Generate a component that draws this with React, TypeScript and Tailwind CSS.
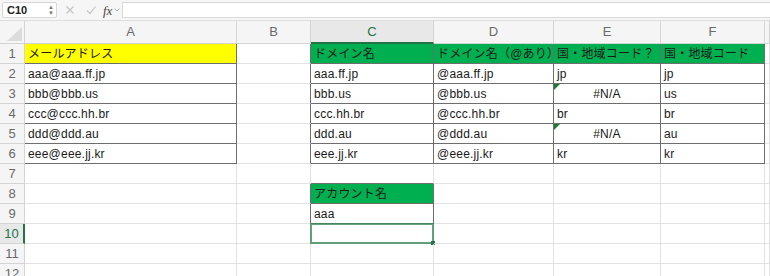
import React from "react";

type Cell = { text?: string; bg?: string; center?: boolean; tri?: boolean };

const data: Record<string, Cell> = {
  "1,1": { text: "メールアドレス", bg: "yellow" },
  "2,1": { text: "aaa@aaa.ff.jp" },
  "3,1": { text: "bbb@bbb.us" },
  "4,1": { text: "ccc@ccc.hh.br" },
  "5,1": { text: "ddd@ddd.au" },
  "6,1": { text: "eee@eee.jj.kr" },
  "1,3": { text: "ドメイン名", bg: "green" },
  "1,4": { text: "ドメイン名（@あり）", bg: "green" },
  "1,5": { text: "国・地域コード？", bg: "green" },
  "1,6": { text: "国・地域コード", bg: "green" },
  "2,3": { text: "aaa.ff.jp" },
  "3,3": { text: "bbb.us" },
  "4,3": { text: "ccc.hh.br" },
  "5,3": { text: "ddd.au" },
  "6,3": { text: "eee.jj.kr" },
  "2,4": { text: "@aaa.ff.jp" },
  "3,4": { text: "@bbb.us" },
  "4,4": { text: "@ccc.hh.br" },
  "5,4": { text: "@ddd.au" },
  "6,4": { text: "@eee.jj.kr" },
  "2,5": { text: "jp" },
  "3,5": { text: "#N/A", center: true, tri: true },
  "4,5": { text: "br" },
  "5,5": { text: "#N/A", center: true, tri: true },
  "6,5": { text: "kr" },
  "2,6": { text: "jp" },
  "3,6": { text: "us" },
  "4,6": { text: "br" },
  "5,6": { text: "au" },
  "6,6": { text: "kr" },
  "8,3": { text: "アカウント名", bg: "green" },
  "9,3": { text: "aaa" },
};

const inTable = (r: number, c: number) =>
  (c === 1 && r >= 1 && r <= 6) ||
  (c >= 3 && c <= 6 && r >= 1 && r <= 6) ||
  (c === 3 && r >= 8 && r <= 9);

const letters = ["A", "B", "C", "D", "E", "F", ""];
const rows = Array.from({ length: 12 }, (_, i) => i + 1);
const font = { fontFamily: '"Liberation Sans", "Noto Sans CJK JP", sans-serif' };

export default function App() {
  return (
    <div className="w-[770px] h-[276px] overflow-hidden bg-white text-black" style={font}>
      {/* toolbar */}
      <div className="h-[21px] bg-[#f6f6f6] border-b border-[#dedede] flex items-center">
        <div className="ml-[2px] w-[55px] h-[16px] bg-white border border-[#d6d6d6] rounded-[2px] flex items-center justify-between pl-[4px] pr-[2px]">
          <span className="text-[11px] font-bold text-[#222] leading-none">C10</span>
          <span className="flex flex-col text-[6px] leading-[6px] text-[#777]">
            <span>▲</span>
            <span>▼</span>
          </span>
        </div>
        <svg className="ml-[8px]" width="10" height="10" viewBox="0 0 10 10">
          <path d="M1.5 1.5 L8.5 8.5 M8.5 1.5 L1.5 8.5" stroke="#c4c4c4" strokeWidth="1.2" fill="none" />
        </svg>
        <svg className="ml-[11px]" width="10" height="10" viewBox="0 0 10 10">
          <path d="M1 5.5 L4 8.5 L9.5 1.5" stroke="#c4c4c4" strokeWidth="1.2" fill="none" />
        </svg>
        <span className="ml-[7px] text-[13px] italic text-[#444] leading-none" style={{ fontFamily: '"Liberation Serif", serif' }}>
          fx
        </span>
        <svg className="ml-[2px]" width="6" height="6" viewBox="0 0 6 6">
          <path d="M0.5 1.5 L3 4 L5.5 1.5" stroke="#b4b4b4" strokeWidth="1" fill="none" />
        </svg>
        <div className="ml-[2px] flex-1 h-[16px] bg-white border border-[#d9d9d9] border-r-0" />
      </div>

      {/* grid */}
      <div className="grid grid-cols-[25px_212px_74px_123px_120px_107px_104px_1fr] grid-rows-[23px_repeat(12,20px)]">
        {/* header row */}
        <div className="bg-[#f5f5f5] border-r border-b border-[#d4d4d4] flex items-end justify-end">
          <svg width="20" height="18" viewBox="0 0 20 18">
            <polygon points="3,16 18,16 18,2" fill="#dcdcdc" />
          </svg>
        </div>
        {letters.map((l, i) =>
          l === "C" ? (
            <div
              key={i}
              className="bg-[#e8e8e8] border-r border-r-[#d4d4d4] border-b-2 border-b-[#217346] flex items-center justify-center text-[13px] text-[#217346]"
            >
              {l}
            </div>
          ) : (
            <div
              key={i}
              className="bg-[#f5f5f5] border-r border-b border-[#d4d4d4] flex items-center justify-center text-[13px] text-[#6a6a6a]"
            >
              {l}
            </div>
          )
        )}

        {rows.map((r) => (
          <React.Fragment key={r}>
            {r === 10 ? (
              <div className="bg-[#e8e8e8] border-r-2 border-r-[#217346] border-b border-b-[#d4d4d4] flex items-center justify-center text-[13px] text-[#217346]">
                {r}
              </div>
            ) : (
              <div className="bg-[#f5f5f5] border-r border-b border-[#d4d4d4] flex items-center justify-center text-[13px] text-[#6a6a6a]">
                {r}
              </div>
            )}
            {letters.map((_, ci) => {
              const c = ci + 1;
              const cell = data[`${r},${c}`] || {};
              const darkR = inTable(r, c) || inTable(r, c + 1);
              const darkB = inTable(r, c) || inTable(r + 1, c);
              const selected = r === 10 && c === 3;
              return (
                <div
                  key={c}
                  className={[
                    "relative flex items-center border-r border-b text-[12px] whitespace-nowrap overflow-visible",
                    darkR ? "border-r-[#6e6e6e]" : "border-r-[#e2e2e2]",
                    darkB ? "border-b-[#6e6e6e]" : "border-b-[#e2e2e2]",
                    cell.bg === "yellow" ? "bg-[#ffff00]" : cell.bg === "green" ? "bg-[#00b050]" : "",
                    cell.center ? "justify-center" : "pl-[3px]",
                  ].join(" ")}
                >
                  {cell.tri && (
                    <span className="absolute left-0 top-0 w-0 h-0 border-t-[6px] border-r-[6px] border-t-[#1e7b34] border-r-transparent" />
                  )}
                  {cell.text && <span className="text-[#1a1a1a] tracking-[0.2px]">{cell.text}</span>}
                  {selected && (
                    <>
                      <span className="absolute left-[-1px] top-[-1px] right-[-1px] bottom-[-1px] border-2 border-[#3d8a5c] opacity-80" />
                      <span className="absolute right-[-2px] bottom-[-2px] w-[4px] h-[4px] bg-[#217346]" />
                    </>
                  )}
                </div>
              );
            })}
          </React.Fragment>
        ))}
      </div>
    </div>
  );
}
